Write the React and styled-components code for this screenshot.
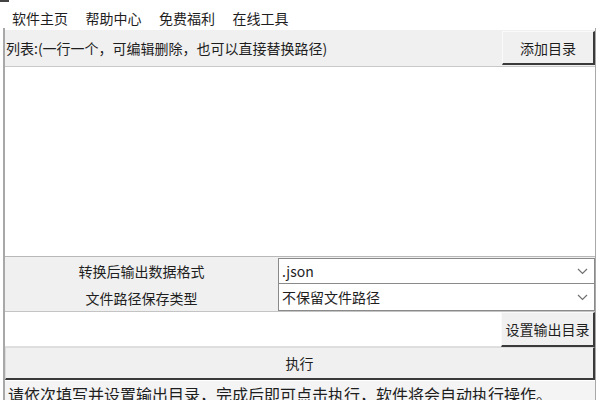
import React from "react";
import styled, { createGlobalStyle } from "styled-components";

const Global = createGlobalStyle`
  html, body { margin: 0; padding: 0; background: #fff; }
  body {
    font-family: "Noto Sans CJK SC", "Liberation Sans", sans-serif;
    color: #1e1e1e;
  }
`;

const Window = styled.div`
  width: 600px;
  height: 400px;
  overflow: hidden;
  display: flex;
  flex-direction: column;
  background: #fff;
  position: relative;
`;

const TopStrip = styled.div`
  height: 8px;
  flex: none;
  position: relative;
  &::before {
    content: "";
    position: absolute;
    left: 0;
    top: 0;
    width: 9px;
    height: 2px;
    background: #444;
  }
`;

const MenuBar = styled.div`
  height: 20px;
  flex: none;
  display: flex;
  align-items: center;
  gap: 17.5px;
  padding-left: 12px;
  font-size: 14px;
`;

const MenuItem = styled.span`
  line-height: 20px;
`;

const Frame = styled.div`
  flex: 1;
  display: flex;
  flex-direction: column;
  margin: 0 4px 0 3px;
  border-left: 2px solid #a8a8a8;
  border-right: 1px solid #a8a8a8;
  padding-top: 2px;
  min-height: 0;
`;

const HeaderRow = styled.div`
  height: 36px;
  flex: none;
  display: flex;
  align-items: center;
  justify-content: space-between;
  background: #f0f0f0;
  border-bottom: 1px solid #c8c8c8;
`;

const HeaderLabel = styled.span`
  font-size: 14px;
  padding-left: 1px;
`;

const RaisedButton = styled.div`
  box-sizing: border-box;
  width: ${p => p.$w}px;
  height: ${p => p.$h}px;
  display: flex;
  align-items: center;
  justify-content: center;
  font-size: 14px;
  background: #f0f0f0;
  border-top: 1px solid #fafafa;
  border-left: 1px solid #fafafa;
  border-right: 2px solid #3a3a3a;
  border-bottom: 2px solid #3a3a3a;
  align-self: ${p => (p.$top ? "flex-start" : "stretch")};
  margin-top: ${p => (p.$top ? "1px" : "0")};
`;

const ListArea = styled.div`
  height: 189px;
  flex: none;
  background: #fff;
  border-bottom: 1px solid #b8b8b8;
`;

const FormGrid = styled.div`
  display: grid;
  grid-template-columns: 273px 1fr;
  grid-auto-rows: 27px;
  background: #f0f0f0;
  flex: none;
  border-bottom: 1px solid #c4c4c4;
`;

const FieldLabel = styled.div`
  display: flex;
  align-items: center;
  justify-content: center;
  font-size: 14px;
`;

const Select = styled.div`
  box-sizing: border-box;
  display: flex;
  align-items: center;
  justify-content: space-between;
  background: #fff;
  border: 1px solid #8a8a8a;
  margin-top: ${p => (p.$first ? "1px" : "0")};
  border-top-width: ${p => (p.$first ? "1px" : "0")};
  padding: 0 6px 0 3px;
  font-size: 14px;
`;

const Chevron = () => (
  <svg width="11" height="7" viewBox="0 0 11 7">
    <path d="M1 1l4.5 4.5L10 1" fill="none" stroke="#707070" strokeWidth="1.2" />
  </svg>
);

const OutputRow = styled.div`
  height: 35px;
  flex: none;
  display: flex;
`;

const PathInput = styled.div`
  flex: 1;
  background: #fff;
  border-bottom: 1px solid #e0e0e0;
`;

const RunButton = styled.div`
  box-sizing: border-box;
  height: 33px;
  flex: none;
  display: flex;
  align-items: center;
  justify-content: center;
  font-size: 14px;
  background: #f0f0f0;
  border: 2px solid #3a3a3a;
  border-top: 1px solid #dcdcdc;
  border-left: 1px solid #dcdcdc;
`;

const StatusBar = styled.div`
  flex: 1;
  background: #f4f4f4;
  border-top: 1px solid #fff;
  padding: 3px 0 0 3px;
  font-size: 16px;
  white-space: nowrap;
  line-height: 20px;
`;

export default function App() {
  return (
    <>
      <Global />
      <Window>
        <TopStrip />
        <MenuBar>
          <MenuItem>软件主页</MenuItem>
          <MenuItem>帮助中心</MenuItem>
          <MenuItem>免费福利</MenuItem>
          <MenuItem>在线工具</MenuItem>
        </MenuBar>
        <Frame>
          <HeaderRow>
            <HeaderLabel>列表:(一行一个，可编辑删除，也可以直接替换路径)</HeaderLabel>
            <RaisedButton $w={93} $h={34} $top>添加目录</RaisedButton>
          </HeaderRow>
          <ListArea />
          <FormGrid>
            <FieldLabel>转换后输出数据格式</FieldLabel>
            <Select $first>
              <span>.json</span>
              <Chevron />
            </Select>
            <FieldLabel>文件路径保存类型</FieldLabel>
            <Select>
              <span>不保留文件路径</span>
              <Chevron />
            </Select>
          </FormGrid>
          <OutputRow>
            <PathInput />
            <RaisedButton $w={94} $h={35}>设置输出目录</RaisedButton>
          </OutputRow>
          <RunButton>执行</RunButton>
          <StatusBar>请依次填写并设置输出目录，完成后即可点击执行，软件将会自动执行操作。</StatusBar>
        </Frame>
      </Window>
    </>
  );
}
